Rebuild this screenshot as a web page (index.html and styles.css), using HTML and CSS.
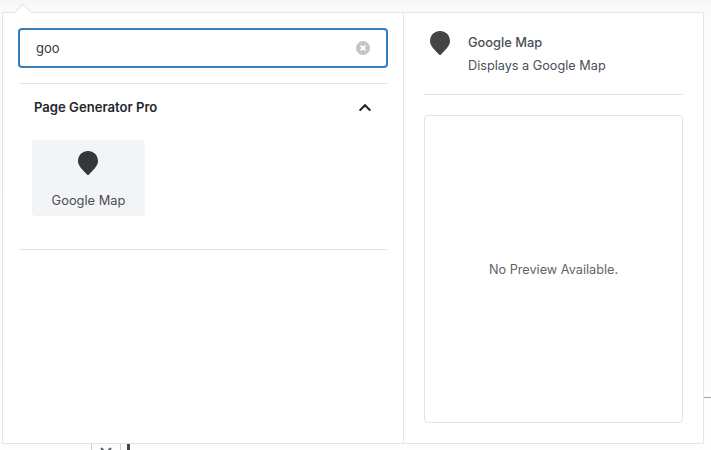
FILE: index.html
```html
<!DOCTYPE html>
<html lang="en">
<head>
<meta charset="utf-8">
<title>Block inserter</title>
<link rel="stylesheet" href="styles.css">
</head>
<body>
<div class="behind-line"></div>
<div class="behind-tool">
  <div class="tool-x"><svg width="14" height="14" viewBox="0 0 14 14"><path d="M2 2l10 10M12 2L2 12" stroke="#555d66" stroke-width="2" fill="none"/></svg></div>
  <div class="caret"></div>
</div>
<div class="arrow"></div>
<div class="popover">
  <div class="left">
    <div class="search-wrap">
      <div class="search">
        <span class="search-text">goo</span>
        <svg class="clear" width="14" height="14" viewBox="0 0 14 14"><circle cx="7" cy="7" r="7" fill="#c4c4c4"/><path d="M4.6 4.6l4.8 4.8M9.4 4.6L4.6 9.4" stroke="#fff" stroke-width="1.8"/></svg>
      </div>
    </div>
    <div class="panel">
      <div class="panel-head">
        <span class="panel-title">Page Generator Pro</span>
        <svg class="chev" width="14" height="9" viewBox="0 0 14 9"><path d="M1.6 7.6L7 2.2l5.4 5.4" stroke="#191e23" stroke-width="2" fill="none"/></svg>
      </div>
      <div class="items">
        <div class="item">
          <svg class="pin" width="20" height="24" viewBox="0 0 20 24"><path d="M10 0C4.400 0 0 4.300 0 10c0 5.200 5.400 9.500 9 13.400.600.700 1.400.700 2 0 3.600-3.900 9-8.200 9-13.400C20 4.300 15.600 0 10 0z" fill="#32373c"/></svg>
          <span class="item-label">Google Map</span>
        </div>
      </div>
    </div>
  </div>
  <div class="right">
    <div class="card">
      <svg class="pin-card" width="20" height="24" viewBox="0 0 20 24"><path d="M10 0C4.400 0 0 4.300 0 10c0 5.200 5.400 9.500 9 13.400.600.700 1.400.700 2 0 3.600-3.900 9-8.200 9-13.400C20 4.300 15.600 0 10 0z" fill="#444"/></svg>
      <div class="card-text">
        <div class="card-title">Google Map</div>
        <div class="card-desc">Displays a Google Map</div>
      </div>
    </div>
    <div class="preview">No Preview Available.</div>
  </div>
</div>
</body>
</html>
```

FILE: styles.css
```css
* { box-sizing: border-box; }
html, body { margin: 0; height: 100%; }
body {
  position: relative;
  width: 711px;
  height: 450px;
  overflow: hidden;
  background: linear-gradient(#f7f7f7, #fbfbfb 12px, #fdfdfd);
  font-family: Inter, "Liberation Sans", sans-serif;
  color: #32373c;
  font-size: 13px;
}
.behind-line {
  position: absolute;
  left: 703px;
  top: 397px;
  width: 8px;
  height: 1px;
  background: #a2a4a6;
}
.behind-tool {
  position: absolute;
  left: 91px;
  top: 444px;
  display: flex;
  height: 6px;
}
.tool-x {
  width: 30px;
  height: 14px;
  border: 1px solid #ccd0d4;
  border-top: 0;
  display: flex;
  justify-content: center;
  padding-top: 2px;
}
.caret {
  width: 3px;
  height: 6px;
  margin-left: 6px;
  background: #40464d;
}
.arrow {
  position: absolute;
  left: 17px;
  top: 6px;
  width: 12px;
  height: 12px;
  transform: rotate(45deg);
  background: #fff;
  border-left: 1px solid #e2e4e7;
  border-top: 1px solid #e2e4e7;
  z-index: 2;
}
.popover {
  position: absolute;
  left: 2px;
  top: 12px;
  width: 702px;
  height: 432px;
  display: flex;
  background: #fff;
  border: 1px solid #e2e4e7;
  z-index: 1;
}
.left {
  width: 401px;
  border-right: 1px solid #e2e4e7;
  padding: 0 16px 0 16px;
}
.search-wrap {
  padding: 15px 0 15px;
  border-bottom: 1px solid #e2e4e7;
}
.search {
  height: 40px;
  margin: 0 -1px;
  border: 2px solid #3a7cb8;
  border-radius: 4px;
  display: flex;
  align-items: center;
  justify-content: space-between;
  padding: 0 16px;
}
.search-text { font-size: 13px; color: #32373c; }
.panel {
  border-bottom: 1px solid #e2e4e7;
  height: 166px;
}
.panel-head {
  display: flex;
  justify-content: space-between;
  align-items: center;
  height: 46px;
  margin-bottom: 1px;
  padding: 0 15px;
}
.panel-title { font-size: 13.100px; font-weight: 600; color: #23282d; }
.items { padding: 9px 13px 0; }
.item {
  width: 113px;
  height: 76px;
  border-radius: 4px;
  background: #f3f4f5;
  display: flex;
  flex-direction: column;
  align-items: center;
  padding-top: 11px;
}
.pin { margin-right: 2px; }
.item-label { margin-top: 17px; font-size: 12.850px; line-height: 18px; color: #4a4f55; }
.right {
  flex: 1;
  padding: 18px 20px 20px;
  display: flex;
  flex-direction: column;
}
.card {
  display: flex;
  height: 64px;
  border-bottom: 1px solid #e2e4e7;
  padding-left: 6px;
  margin-bottom: 20px;
  flex: none;
}
.card-text { margin-left: 18px; padding-top: 3px; }
.card-title { font-size: 12.850px; font-weight: 500; line-height: 18px; color: #4a4f55; }
.card-desc { font-size: 12.700px; line-height: 18px; margin-top: 5px; color: #4a4f55; }
.preview {
  flex: 1;
  border: 1px solid #e2e4e7;
  border-radius: 4px;
  display: flex;
  align-items: center;
  justify-content: center;
  font-size: 12.700px;
  color: #5f656c;
}
```
